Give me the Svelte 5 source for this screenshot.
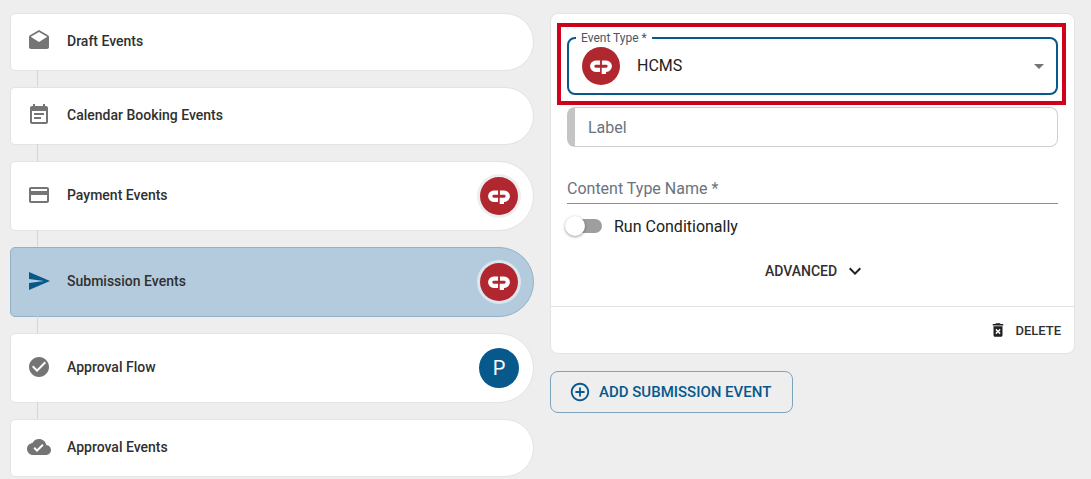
<script>
	const steps = [
		{ label: 'Draft Events', icon: 'M21.99 8c0-.72-.37-1.35-.94-1.7L12 1 2.95 6.3C2.38 6.65 2 7.28 2 8v10c0 1.1.9 2 2 2h16c1.1 0 2-.9 2-2l-.01-10zM12 13L3.74 7.84 12 3l8.26 4.84L12 13z' },
		{ label: 'Calendar Booking Events', icon: 'M17 10H7v2h10v-2zm2-7h-1V1h-2v2H8V1H6v2H5c-1.11 0-1.99.9-1.99 2L3 19c0 1.1.89 2 2 2h14c1.1 0 2-.9 2-2V5c0-1.1-.9-2-2-2zm0 16H5V8h14v11zm-5-5H7v2h7v-2z' },
		{ label: 'Payment Events', icon: 'M20 4H4c-1.11 0-1.99.89-1.99 2L2 18c0 1.11.89 2 2 2h16c1.11 0 2-.89 2-2V6c0-1.11-.89-2-2-2zm0 14H4v-6h16v6zm0-10H4V6h16v2z', badge: 'logo' },
		{ label: 'Submission Events', icon: 'M2.01 21L23 12 2.01 3 2 10l15 2-15 2z', badge: 'logo', active: true },
		{ label: 'Approval Flow', icon: 'M12 2C6.48 2 2 6.48 2 12s4.48 10 10 10 10-4.48 10-10S17.52 2 12 2zm-2 15l-5-5 1.41-1.41L10 14.17l7.59-7.59L19 8l-9 9z', badge: 'P' },
		{ label: 'Approval Events', icon: 'M19.35 10.04C18.67 6.59 15.64 4 12 4 9.11 4 6.6 5.64 5.35 8.04 2.34 8.36 0 10.91 0 14c0 3.31 2.69 6 6 6h13c2.76 0 5-2.24 5-5 0-2.64-2.05-4.78-4.65-4.96zM10 17l-3.5-3.5 1.41-1.41L10 14.17 15.18 9l1.41 1.41L10 17z' }
	];
</script>

{#snippet logo()}
	<svg class="logo" viewBox="0 0 40 40">
		<circle cx="20" cy="20" r="20" fill="#b0272f" />
		<path d="M19 16.5h-4.5a3.75 3.75 0 0 0 0 7.5h4.5M21 16.5h4.5a3.75 3.75 0 0 1 0 7.5H23v4.5" fill="none" stroke="#fff" stroke-width="4.5" />
	</svg>
{/snippet}

<main class="page">
	<section class="steps">
		{#each steps as step}
			<div class="step" class:active={step.active} class:tall={step.badge}>
				<svg class="step-icon" viewBox="0 0 24 24"><path d={step.icon} /></svg>
				<span class="step-label">{step.label}</span>
				{#if step.badge === 'logo'}
					<span class="badge">{@render logo()}</span>
				{:else if step.badge}
					<span class="badge letter">{step.badge}</span>
				{/if}
			</div>
		{/each}
	</section>

	<section class="side">
		<div class="card">
			<div class="fields">
				<div class="highlight">
					<div class="select">
						<span class="legend">Event Type *</span>
						<span class="select-logo">{@render logo()}</span>
						<span class="select-value">HCMS</span>
						<svg class="caret" viewBox="0 0 24 24"><path d="M7 10l5 5 5-5z" /></svg>
					</div>
				</div>
				<div class="label-field">Label</div>
				<div class="text-field">Content Type Name *</div>
				<div class="toggle-row">
					<span class="toggle"><span class="knob"></span></span>
					<span>Run Conditionally</span>
				</div>
				<div class="advanced">
					<span>ADVANCED</span>
					<svg viewBox="0 0 24 24"><path d="M16.59 8.59L12 13.17 7.41 8.59 6 10l6 6 6-6z" /></svg>
				</div>
			</div>
			<div class="actions">
				<svg viewBox="0 0 24 24"><path d="M6 19c0 1.1.9 2 2 2h8c1.1 0 2-.9 2-2V7H6v12zm2.46-7.12l1.41-1.41L12 12.59l2.12-2.12 1.41 1.41L13.41 14l2.12 2.12-1.41 1.41L12 15.41l-2.12 2.12-1.41-1.41L10.59 14l-2.13-2.12zM15.5 4l-1-1h-5l-1 1H5v2h14V4z" /></svg>
				<span>DELETE</span>
			</div>
		</div>
		<button class="add">
			<svg viewBox="0 0 24 24"><path d="M13 7h-2v4H7v2h4v4h2v-4h4v-2h-4V7zm-1-5C6.48 2 2 6.48 2 12s4.48 10 10 10 10-4.48 10-10S17.52 2 12 2zm0 18c-4.41 0-8-3.59-8-8s3.59-8 8-8 8 3.59 8 8-3.59 8-8 8z" /></svg>
			<span>ADD SUBMISSION EVENT</span>
		</button>
	</section>
</main>

<style>
	:global(body) {
		background: #eeeeee;
		font-family: Roboto, 'Liberation Sans', sans-serif;
		color: #212121;
	}

	.page {
		height: 479px;
		overflow: hidden;
		box-sizing: border-box;
		padding: 13px 16px 0 10px;
		display: grid;
		grid-template-columns: 524px 525px;
		column-gap: 16px;
		align-items: start;
	}

	.steps {
		display: flex;
		flex-direction: column;
		gap: 16px;
	}

	.step {
		position: relative;
		box-sizing: border-box;
		height: 58px;
		display: flex;
		align-items: center;
		padding: 0 12px 0 16px;
		background: #fff;
		border: 1px solid #e3e3e3;
		border-radius: 5px 29px 29px 5px;
		font-size: 14px;
		font-weight: 500;
		color: #303030;
	}

	.step.tall {
		height: 70px;
		border-radius: 5px 35px 35px 5px;
	}

	.step.active {
		background: #b3cbdc;
		border-color: #94b2c6;
	}

	/* connector between two steps */
	.step:not(:last-child)::after {
		content: '';
		position: absolute;
		left: 26px;
		top: 100%;
		width: 1px;
		height: 18px;
		background: #d5d5d5;
	}

	.step-icon {
		width: 24px;
		height: 24px;
		margin-bottom: 2px;
		fill: #757575;
		flex: none;
	}

	.step.active .step-icon {
		fill: #07598c;
	}

	.step-label {
		margin: 0 0 2px 16px;
		flex: 1;
	}

	.badge {
		box-sizing: border-box;
		width: 44px;
		height: 44px;
		border-radius: 50%;
		display: flex;
		align-items: center;
		justify-content: center;
		background: #eeeeee;
	}

	.step.active .badge {
		background: #dbe6ee;
	}

	.badge .logo {
		width: 38px;
		height: 38px;
	}

	.step .badge.letter {
		width: 40px;
		height: 40px;
		margin-right: 2px;
		background: #07598c;
		color: #fff;
		font-size: 20px;
		font-weight: 400;
	}

	.logo {
		display: block;
	}

	.side {
		display: flex;
		flex-direction: column;
		align-items: flex-start;
		gap: 17px;
	}

	.card {
		box-sizing: border-box;
		width: 100%;
		height: 341px;
		background: #fff;
		border: 1px solid #e3e3e3;
		border-radius: 8px;
		display: flex;
		flex-direction: column;
	}

	.fields {
		flex: 1;
		padding: 9px 8px 0 6px;
	}

	.highlight {
		border: 4px solid #d0021b;
		padding: 10px 4px 6px 6px;
	}

	.select {
		position: relative;
		box-sizing: border-box;
		height: 58px;
		border: 2px solid #07598c;
		border-radius: 8px;
		display: flex;
		align-items: center;
		padding: 0 5px 0 13px;
	}

	.legend {
		position: absolute;
		left: 7px;
		top: -8px;
		padding: 0 5px;
		background: #fff;
		font-size: 12px;
		line-height: 14px;
		color: #4a5568;
	}

	.select-logo {
		width: 38px;
		height: 38px;
	}

	.select-logo .logo {
		width: 38px;
		height: 38px;
	}

	.select-value {
		margin: 0 0 2px 17px;
		flex: 1;
		font-size: 16px;
	}

	.caret {
		width: 24px;
		height: 24px;
		fill: #757575;
	}

	.label-field {
		box-sizing: border-box;
		height: 40px;
		margin: 2px 8px 0 10px;
		padding-left: 13px;
		border: 1px solid #cfcfcf;
		border-left: 8px solid #c4c4c4;
		border-radius: 8px;
		display: flex;
		align-items: center;
		font-size: 16px;
		color: #6b7280;
	}

	.text-field {
		box-sizing: border-box;
		height: 37px;
		margin: 20px 8px 0 10px;
		padding-top: 6px;
		border-bottom: 1px solid #8f8f8f;
		display: flex;
		align-items: center;
		font-size: 16px;
		color: #6b7280;
	}

	.toggle-row {
		display: flex;
		align-items: center;
		margin: 10px 8px 0 10px;
		font-size: 16px;
		height: 24px;
	}

	.toggle {
		position: relative;
		width: 35px;
		height: 14px;
		margin-right: 12px;
		border-radius: 7px;
		background: #9e9e9e;
	}

	.knob {
		position: absolute;
		left: -2px;
		top: -3px;
		width: 20px;
		height: 20px;
		border-radius: 50%;
		background: #fff;
		box-shadow: 0 1px 3px rgba(0, 0, 0, 0.4);
	}

	.advanced {
		display: flex;
		align-items: center;
		justify-content: center;
		gap: 6px;
		margin-top: 21px;
		padding-left: 9px;
		font-size: 14px;
		font-weight: 500;
		height: 24px;
		color: #303030;
	}

	.advanced svg {
		width: 24px;
		height: 24px;
		fill: #212121;
	}

	.actions {
		box-sizing: border-box;
		height: 47px;
		border-top: 1px solid #e3e3e3;
		display: flex;
		align-items: center;
		justify-content: flex-end;
		gap: 8px;
		padding: 0 13px 0 0;
		font-size: 13px;
		font-weight: 500;
		color: #303030;
	}

	.actions svg {
		width: 18px;
		height: 18px;
		fill: #212121;
	}

	.add {
		box-sizing: border-box;
		width: 243px;
		height: 42px;
		padding: 0 0 0 18px;
		display: flex;
		align-items: center;
		gap: 8px;
		background: transparent;
		border: 1px solid #7ea4bd;
		border-radius: 8px;
		font-family: inherit;
		font-size: 15px;
		font-weight: 500;
		color: #07598c;
	}

	.add svg {
		width: 22px;
		height: 22px;
		fill: #07598c;
	}
</style>
